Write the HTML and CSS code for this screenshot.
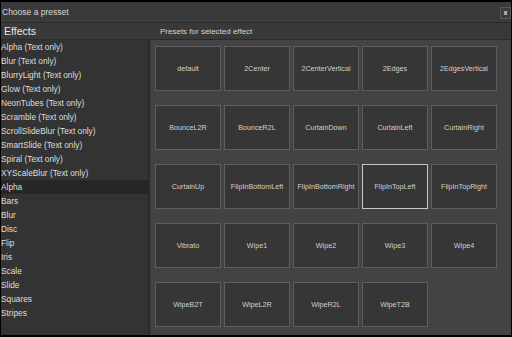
FILE: index.html
```html
<!DOCTYPE html>
<html lang="en">
<head>
    <meta charset="UTF-8">
    <title>Choose a presset</title>
    <link rel="stylesheet" href="styles.css">
</head>
<body>
    <div class="window">
        <div class="title-bar">
            <span class="title">Choose a presset</span>
            <button class="close-btn" aria-label="Close">x</button>
        </div>

        <div class="headers">
            <div class="effects-head">Effects</div>
            <div class="presets-head">Presets for selected effect</div>
        </div>

        <div class="panes">
            <ul class="effect-list">
                <li>Alpha (Text only)</li>
                <li>Blur (Text only)</li>
                <li>BlurryLight (Text only)</li>
                <li>Glow (Text only)</li>
                <li>NeonTubes (Text only)</li>
                <li>Scramble (Text only)</li>
                <li>ScrollSlideBlur (Text only)</li>
                <li>SmartSlide (Text only)</li>
                <li>Spiral (Text only)</li>
                <li>XYScaleBlur (Text only)</li>
                <li class="selected">Alpha</li>
                <li>Bars</li>
                <li>Blur</li>
                <li>Disc</li>
                <li>Flip</li>
                <li>Iris</li>
                <li>Scale</li>
                <li>Slide</li>
                <li>Squares</li>
                <li>Stripes</li>
            </ul>

            <div class="separator"></div>

            <div class="preset-area">
                <div class="preset-grid">
                    <button class="preset">default</button>
                    <button class="preset">2Center</button>
                    <button class="preset">2CenterVertical</button>
                    <button class="preset">2Edges</button>
                    <button class="preset">2EdgesVertical</button>
                    <button class="preset">BounceL2R</button>
                    <button class="preset">BounceR2L</button>
                    <button class="preset">CurtainDown</button>
                    <button class="preset">CurtainLeft</button>
                    <button class="preset">CurtainRight</button>
                    <button class="preset">CurtainUp</button>
                    <button class="preset">FlipInBottomLeft</button>
                    <button class="preset">FlipInBottomRight</button>
                    <button class="preset active">FlipInTopLeft</button>
                    <button class="preset">FlipInTopRight</button>
                    <button class="preset">Vibrato</button>
                    <button class="preset">Wipe1</button>
                    <button class="preset">Wipe2</button>
                    <button class="preset">Wipe3</button>
                    <button class="preset">Wipe4</button>
                    <button class="preset">WipeB2T</button>
                    <button class="preset">WipeL2R</button>
                    <button class="preset">WipeR2L</button>
                    <button class="preset">WipeT2B</button>
                </div>
            </div>
        </div>
    </div>
</body>
</html>
```

FILE: styles.css
```css
:root {
    --frame: #000000;
    --title-bg: #3a3a3a;
    --head-bg: #393939;
    --list-bg: #333333;
    --area-bg: #434343;
    --btn-bg: #363636;
    --btn-border: #5e5e5e;
    --btn-active: #c8c8c8;
    --line: #2a2a2a;
    --text: #dedede;
    --text-btn: #d0d0d0;
}

* {
    box-sizing: border-box;
    margin: 0;
    padding: 0;
}

html, body {
    height: 100%;
}

body {
    background: var(--frame);
    font-family: 'Liberation Sans', Arial, sans-serif;
    color: var(--text);
    overflow: hidden;
}

.window {
    height: 100%;
    padding: 2px 1px 2px 1px;
    display: flex;
    flex-direction: column;
}

.title-bar {
    height: 21px;
    background: var(--title-bg);
    border-bottom: 1px solid var(--line);
    display: flex;
    align-items: center;
    justify-content: space-between;
    padding: 0 0 1px 1px;
}

.title {
    font-size: 8.5px;
    color: #d8d8d8;
}

.close-btn {
    width: 11px;
    height: 12px;
    background: #3c3c3c;
    border: 1px solid #5a5a5a;
    color: #e6e6e6;
    font-family: 'Liberation Sans', Arial, sans-serif;
    font-size: 7px;
    font-weight: 700;
    line-height: 9px;
    margin-top: 2px;
}

.headers {
    height: 17px;
    background: var(--head-bg);
    border-bottom: 1px solid var(--line);
    display: flex;
    align-items: center;
}

.effects-head {
    width: 149px;
    padding-left: 3px;
    font-size: 10.5px;
    color: #e8e8e8;
}

.presets-head {
    padding-left: 10px;
    font-size: 8px;
    color: #d4d4d4;
}

.panes {
    flex: 1;
    display: flex;
    min-height: 0;
}

.effect-list {
    width: 147px;
    background: var(--list-bg);
    list-style: none;
}

.effect-list li {
    height: 14px;
    line-height: 14px;
    font-size: 8.3px;
    white-space: nowrap;
}

.effect-list li.selected {
    background: #262626;
}

.separator {
    width: 2px;
    background: #2b2b2b;
}

.preset-area {
    flex: 1;
    background: var(--area-bg);
    border-left: 1px solid #3a3a3a;
    padding: 6px 0 0 4px;
}

.preset-grid {
    display: grid;
    grid-template-columns: repeat(5, 66px);
    grid-auto-rows: 45px;
    column-gap: 3px;
    row-gap: 14px;
}

.preset {
    background: var(--btn-bg);
    border: 1px solid var(--btn-border);
    color: var(--text-btn);
    font-family: 'Liberation Sans', Arial, sans-serif;
    font-size: 7.2px;
    white-space: nowrap;
    overflow: hidden;
}

.preset.active {
    border-color: var(--btn-active);
}
```
